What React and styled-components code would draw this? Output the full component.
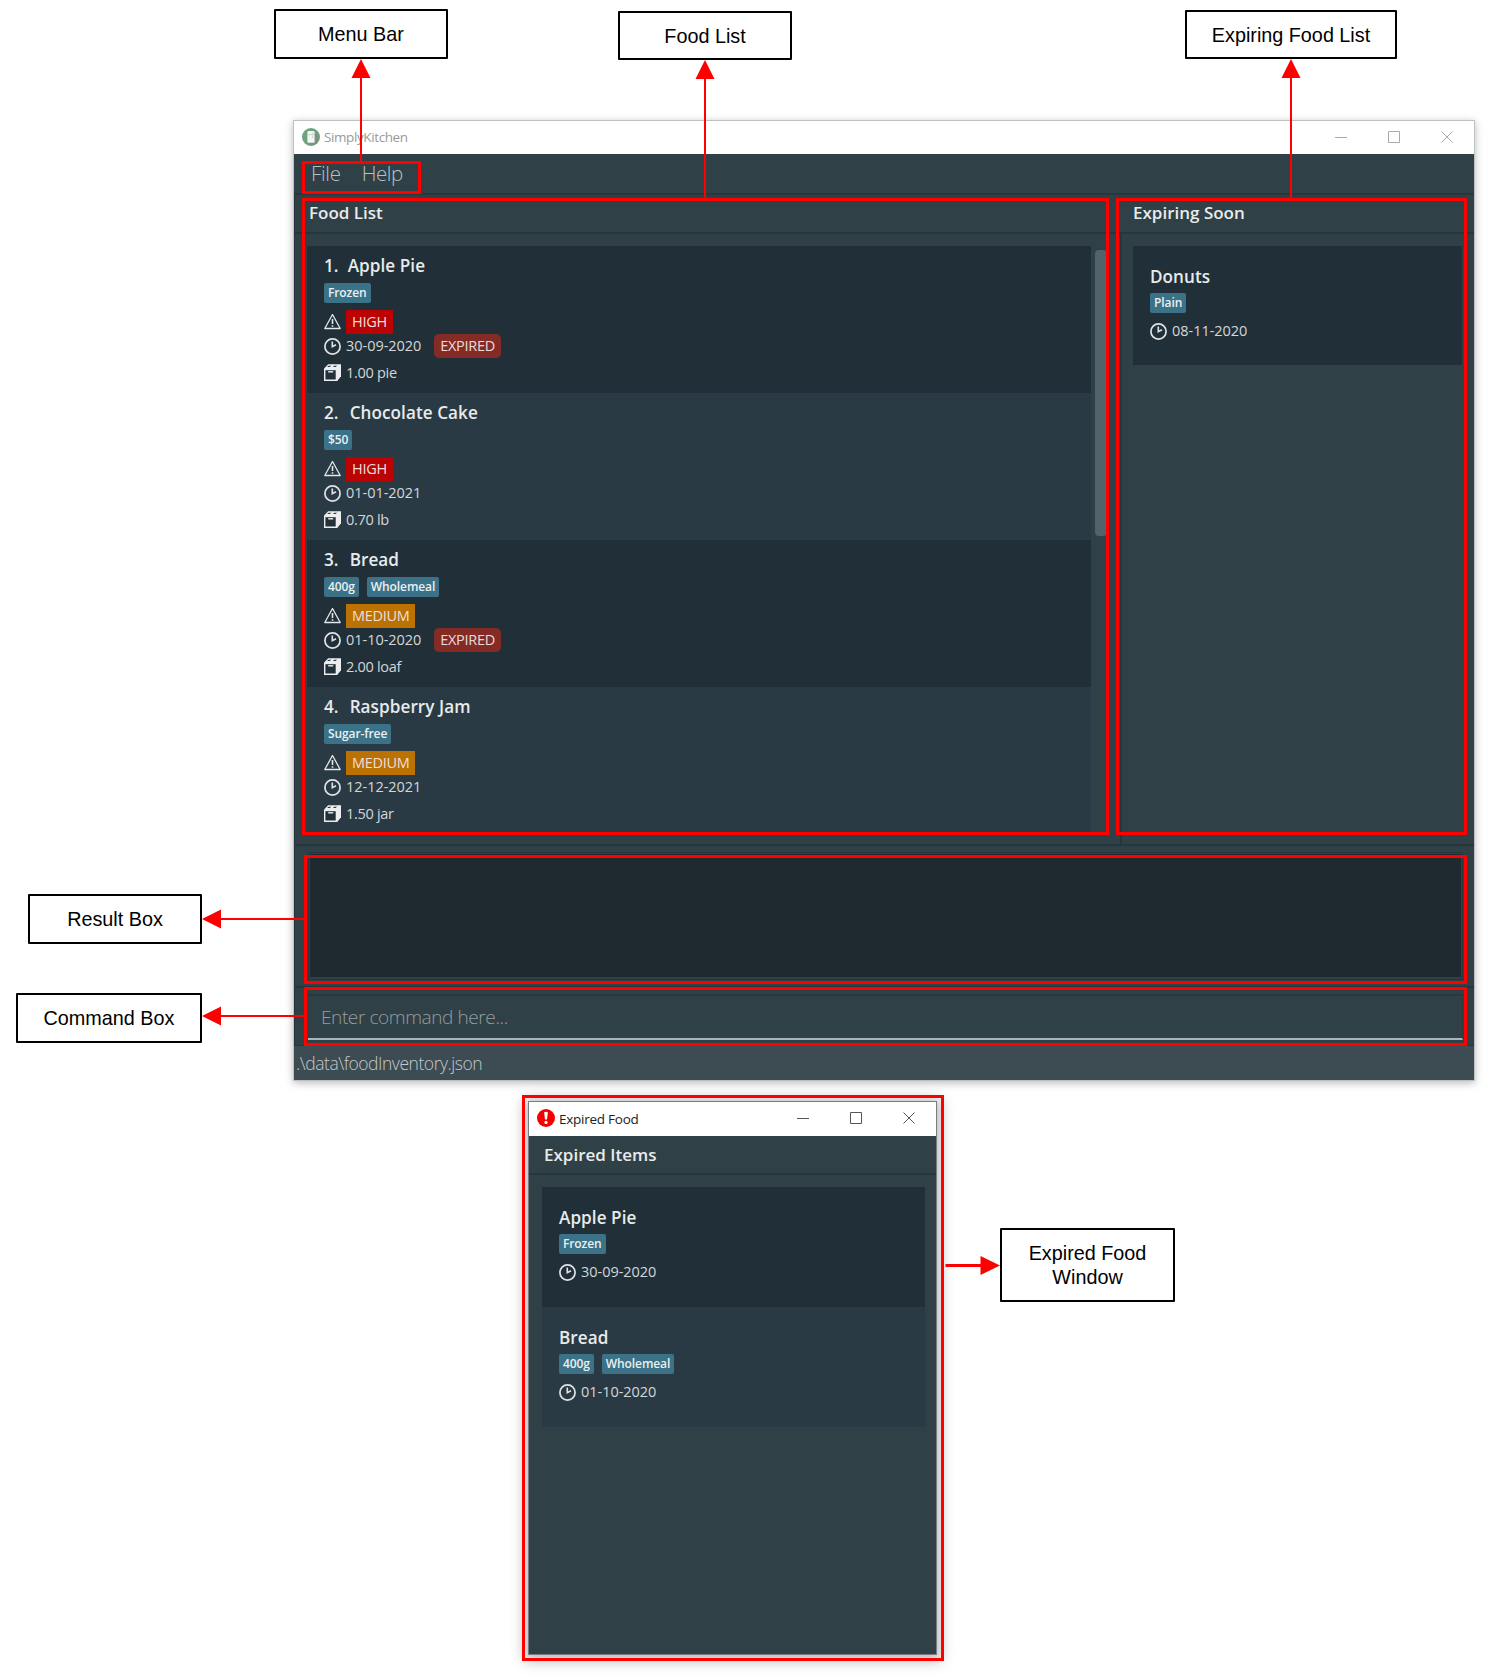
import React from "react";
import styled, { createGlobalStyle } from "styled-components";

const Global = createGlobalStyle`
  * { box-sizing: border-box; }
  body { margin: 0; background: #fff; }
`;

const ui = `"Open Sans", "Noto Sans", sans-serif`;

const Page = styled.main`
  position: relative;
  width: 1487px;
  height: 1677px;
  padding-top: 120px;
  overflow: hidden;
  background: #fff;
  font-family: ${ui};
`;

/* ---------- windows ---------- */

const Window = styled.section`
  display: flex;
  flex-direction: column;
  width: ${(p) => p.$width}px;
  height: ${(p) => p.$height}px;
  margin-left: ${(p) => p.$left}px;
  margin-bottom: 20px;
  border: 1px solid ${(p) => p.$edge};
  border-bottom-width: ${(p) => p.$bottomEdge}px;
  background: #304047;
  box-shadow: ${(p) => p.$shadow};
`;

const TitleBar = styled.header`
  display: flex;
  flex: none;
  align-items: center;
  height: ${(p) => p.$height}px;
  padding: 0 21px 2px 8px;
  background: #fff;
  color: ${(p) => p.$color};
  font-size: 13.5px;
`;

const TitleText = styled.span`
  flex: 1;
  margin-left: 4px;
  padding-top: 1px;
  line-height: 20px;
  letter-spacing: ${(p) => p.$spacing}px;
`;

const WindowButtons = styled.div`
  display: flex;
  gap: 41px;
  color: ${(p) => p.$color};
  svg { display: block; }
`;

const MenuBar = styled.nav`
  display: flex;
  flex: none;
  gap: 21px;
  height: 41px;
  padding: 2px 0 0 17px;
  border-bottom: 2px solid #28373e;
  color: #b9c0c3;
  font-size: 20.5px;
  font-weight: 300;
  line-height: 34px;
`;

const MenuItem = styled.span`
  letter-spacing: ${(p) => p.$spacing}px;
`;

const Panels = styled.div`
  display: grid;
  flex: none;
  grid-template-columns: 825px 1fr;
  height: 651px;
  border-bottom: 2px solid #27363d;
  border-left: 1px solid #27363d;
`;

const Panel = styled.section`
  display: flex;
  flex-direction: column;
  min-width: 0;
  min-height: 0;
`;

const PanelHeading = styled.h2`
  flex: none;
  height: 39px;
  margin: 0;
  padding-left: ${(p) => p.$indent}px;
  border-bottom: 2px solid #27363d;
  color: #e9ebec;
  font-size: 17px;
  font-weight: 600;
  line-height: ${(p) => p.$line || 35}px;
`;

const ListArea = styled.div`
  display: flex;
  flex: 1;
  align-items: flex-start;
  min-height: 0;
  gap: 4px;
  padding: ${(p) => p.$pad};
  border-left: ${(p) => (p.$divider ? "2px solid #27363d" : "0")};
`;

const List = styled.ul`
  flex: 1;
  height: 100%;
  margin: 0;
  padding: 0;
  overflow: hidden;
  list-style: none;
`;

const ScrollThumb = styled.div`
  width: 12px;
  height: 286px;
  margin-top: 4px;
  border-radius: 4px;
  background: #52636c;
`;

/* ---------- food cards ---------- */

const Card = styled.li`
  height: ${(p) => (p.$compact ? 120 : 147)}px;
  padding: ${(p) => (p.$compact ? 19 : 8)}px 0 0 17px;
  background: ${(p) => (p.$alt ? "#2a3a44" : "#213038")};
  &:only-child { height: 119px; }
`;

const CardTitle = styled.h3`
  display: flex;
  gap: ${(p) => (p.$first ? 9 : 11)}px;
  height: 24px;
  margin: 0 0 ${(p) => (p.$compact ? 4 : 5)}px;
  color: #e8ebec;
  font-size: 17.1px;
  font-weight: 600;
  line-height: 24px;
  letter-spacing: 0.08px;
`;

const Tags = styled.div`
  display: flex;
  gap: 8px;
  margin-bottom: ${(p) => (p.$compact ? 6 : 7)}px;
`;

const Tag = styled.span`
  height: 20px;
  padding: 0 4px;
  border-radius: 2px;
  background: #3b7288;
  color: #eaf0f2;
  font-size: 12px;
  font-weight: 600;
  line-height: 20.5px;
  letter-spacing: -0.1px;
`;

const Detail = styled.div`
  display: flex;
  align-items: center;
  height: 24px;
  margin-top: ${(p) => p.$gap || 0}px;
  color: #d3d7d9;
  font-size: 14.5px;
  line-height: 24px;
  letter-spacing: -0.3px;
  svg { flex: none; margin-right: 5px; }
`;

const DateText = styled.span`
  letter-spacing: -0.04px;
`;

const Priority = styled.span`
  height: 24px;
  padding: 0 6px;
  background: ${(p) => (p.$level === "HIGH" ? "#bb0303" : "#bb7203")};
  color: #efdfdc;
`;

const Expired = styled.span`
  height: 24px;
  margin-left: 13px;
  padding: 0 6px;
  border-radius: 5px;
  background: #842b26;
  color: #ecdcdb;
`;

/* ---------- lower part of the main window ---------- */

const ResultArea = styled.div`
  flex: none;
  height: 142px;
  padding: 6px 11px 5px 13px;
  border-bottom: 2px solid #27363d;
  border-left: 1px solid #27363d;
`;

const ResultBox = styled.div`
  height: 128px;
  padding: 1px 1px 2px;
  border: 1px solid #27363d;
  &::before {
    content: "";
    display: block;
    height: 100%;
    background: #1f2a30;
  }
`;

const CommandArea = styled.div`
  flex: none;
  height: 58px;
  padding: 6px 11px 0 13px;
  border-bottom: 1px solid #27363d;
  border-left: 1px solid #27363d;
`;

const CommandInput = styled.div`
  height: 46px;
  padding-left: 13px;
  border-top: 2px solid #2a3940;
  border-right: 1px solid #2a3940;
  border-bottom: 2px solid #a9b3b9;
  color: #959d9f;
  font-size: 19px;
  font-weight: 300;
  line-height: 42px;
  letter-spacing: -0.4px;
`;

const StatusBar = styled.footer`
  flex: 1;
  padding-left: 2px;
  background: #3d4b53;
  color: #c3c9cc;
  font-size: 17.5px;
  font-weight: 300;
  line-height: 34px;
  letter-spacing: -0.46px;
`;

/* ---------- annotations laid over the windows ---------- */

const Callout = styled.div`
  position: absolute;
  left: ${(p) => p.$x}px;
  top: ${(p) => p.$y}px;
  display: flex;
  align-items: center;
  justify-content: center;
  width: ${(p) => p.$w}px;
  height: ${(p) => p.$h}px;
  border: 2px solid #000;
  border-radius: 1px;
  background: #fff;
  color: #000;
  font: 19.8px/24px "Liberation Sans", Arial, sans-serif;
  text-align: center;
`;

const Highlight = styled.div`
  position: absolute;
  left: ${(p) => p.$x}px;
  top: ${(p) => p.$y}px;
  width: ${(p) => p.$w}px;
  height: ${(p) => p.$h}px;
  border: 3px solid #f00;
`;

const ArrowLayer = styled.svg`
  position: absolute;
  inset: 0;
  pointer-events: none;
`;

/* ---------- icons ---------- */

const FridgeIcon = () => (
  <svg width="18" height="18" viewBox="0 0 18 18">
    <circle cx="9" cy="9" r="9" fill="#6da37f" />
    <path d="M12.5 4 17 8.5a9 9 0 0 1-6 9l-5-3z" fill="#7a9481" />
    <rect x="5.4" y="3" width="7.2" height="11.7" rx="1" fill="#f4f6f4" />
    <path d="M5.4 6.6h7.2M10.8 4.4v1.4M10.8 7.6v2.6" stroke="#b9c4bc" strokeWidth=".7" />
  </svg>
);

const AlertIcon = () => (
  <svg width="18" height="18" viewBox="0 0 18 18">
    <circle cx="9" cy="9" r="9" fill="#f30000" />
    <path d="M7.1 3.3Q9 2.4 10.9 3.3L10 10.6H8z" fill="#fff" />
    <circle cx="9" cy="13.4" r="1.6" fill="#fff" />
  </svg>
);

const WarningIcon = () => (
  <svg width="17" height="17" viewBox="0 0 17 17" fill="none" stroke="#e3e6e7" strokeLinejoin="round">
    <path d="M8.5.5 16.2 14.5H.8z" strokeWidth="1.3" />
    <path d="M8.5 5v5M8.5 11.3v1.4" strokeWidth="1.6" />
  </svg>
);

const ClockIcon = () => (
  <svg width="17" height="17" viewBox="0 0 17 17" fill="none" stroke="#e0e3e5">
    <circle cx="8.5" cy="8.5" r="7.6" strokeWidth="1.7" />
    <path d="M8.3 3.6V8.7L12 6.7" strokeWidth="1.6" />
  </svg>
);

const BoxIcon = () => (
  <svg width="17" height="17" viewBox="0 0 17 17">
    <path d="M4.2.3H17v11.9L13.2 17H0V4.6z" fill="#eceeef" />
    <path d="M1.4 6.2h10.3v9.3H1.4z" fill="#223139" />
    <path d="M4.8 1.8h2.6L5.6 3.1H3zM10.6 1.8h2.6L11.4 3.1H8.8z" fill="#223139" />
    <path d="M4.2 7.8h5" stroke="#eceeef" strokeWidth="1.4" />
  </svg>
);

const Controls = ({ color }) => (
  <WindowButtons $color={color}>
    {["M0 6.5h12", "M.5.5h11v11h-11z", "M.5.5l11 11M11.5.5l-11 11"].map((d) => (
      <svg key={d} width="12" height="12" viewBox="0 0 12 12" fill="none" stroke="currentColor">
        <path d={d} />
      </svg>
    ))}
  </WindowButtons>
);

/* ---------- data ---------- */

const foods = [
  { name: "Apple Pie", tags: ["Frozen"], priority: "HIGH", date: "30-09-2020", expired: true, quantity: "1.00 pie" },
  { name: "Chocolate Cake", tags: ["$50"], priority: "HIGH", date: "01-01-2021", quantity: "0.70 lb" },
  { name: "Bread", tags: ["400g", "Wholemeal"], priority: "MEDIUM", date: "01-10-2020", expired: true, quantity: "2.00 loaf" },
  { name: "Raspberry Jam", tags: ["Sugar-free"], priority: "MEDIUM", date: "12-12-2021", quantity: "1.50 jar" },
];
const expiring = [{ name: "Donuts", tags: ["Plain"], date: "08-11-2020" }];
const expiredFoods = foods.filter((f) => f.expired);

const callouts = [
  ["Menu Bar", 274, 9, 174, 50],
  ["Food List", 618, 11, 174, 49],
  ["Expiring Food List", 1185, 10, 212, 49],
  ["Result Box", 28, 894, 174, 50],
  ["Command Box", 16, 993, 186, 50],
  ["Expired Food\nWindow", 1000, 1228, 175, 74],
];

const highlights = [
  [302, 161, 119, 33],
  [302, 198, 807, 637],
  [1116, 198, 351, 637],
  [304, 855, 1163, 129],
  [304, 987, 1163, 59],
  [522, 1095, 422, 566],
];

const FoodCard = ({ food, index, compact }) => (
  <Card $alt={index % 2 === 1} $compact={compact}>
    <CardTitle $compact={compact} $first={index === 0}>
      {!compact && <span>{index + 1}.</span>}
      <span>{food.name}</span>
    </CardTitle>
    <Tags $compact={compact}>
      {food.tags.map((t) => (
        <Tag key={t}>{t}</Tag>
      ))}
    </Tags>
    {!compact && (
      <Detail>
        <WarningIcon />
        <Priority $level={food.priority}>{food.priority}</Priority>
      </Detail>
    )}
    <Detail>
      <ClockIcon />
      <DateText>{food.date}</DateText>
      {!compact && food.expired && <Expired>EXPIRED</Expired>}
    </Detail>
    {!compact && (
      <Detail $gap={2.5}>
        <BoxIcon />
        {food.quantity}
      </Detail>
    )}
  </Card>
);

const FoodCards = ({ items, compact }) => (
  <List>
    {items.map((f, i) => (
      <FoodCard key={f.name} food={f} index={i} compact={compact} />
    ))}
  </List>
);

export default function App() {
  return (
    <Page>
      <Global />
      <Window $width={1182} $height={961} $left={293} $edge="#bcc0c1" $bottomEdge={2} $shadow="0 2px 8px rgba(0,0,0,.28)">
        <TitleBar $height={33} $color="#999">
          <FridgeIcon />
          <TitleText $spacing={-0.4}>SimplyKitchen</TitleText>
          <Controls color="#aaa" />
        </TitleBar>
        <MenuBar>
          <MenuItem $spacing={-0.3}>File</MenuItem>
          <MenuItem $spacing={-0.4}>Help</MenuItem>
        </MenuBar>
        <Panels>
          <Panel>
            <PanelHeading $indent={14}>Food List</PanelHeading>
            <ListArea $pad="12px 13px 10px 12px">
              <FoodCards items={foods} />
              <ScrollThumb />
            </ListArea>
          </Panel>
          <Panel>
            <PanelHeading $indent={13}>Expiring Soon</PanelHeading>
            <ListArea $divider $pad="12px 12px 10px 11px">
              <FoodCards items={expiring} compact />
            </ListArea>
          </Panel>
        </Panels>
        <ResultArea>
          <ResultBox />
        </ResultArea>
        <CommandArea>
          <CommandInput>Enter command here...</CommandInput>
        </CommandArea>
        <StatusBar>.\data\foodInventory.json</StatusBar>
      </Window>

      <Window $width={409} $height={554} $left={528} $edge="#777d80" $bottomEdge={1} $shadow="0 2px 13px 4px rgba(0,0,0,.28)">
        <TitleBar $height={34} $color="#222">
          <AlertIcon />
          <TitleText $spacing={-0.25}>Expired Food</TitleText>
          <Controls color="#555" />
        </TitleBar>
        <Panel>
          <PanelHeading $indent={15} $line={37}>Expired Items</PanelHeading>
          <ListArea $pad="12px 11px 0 13px">
            <FoodCards items={expiredFoods} compact />
          </ListArea>
        </Panel>
      </Window>

      {highlights.map(([x, y, w, h]) => (
        <Highlight key={`${x}-${y}`} $x={x} $y={y} $w={w} $h={h} />
      ))}
      <ArrowLayer width="1487" height="1677" fill="#f00" stroke="#f00">
        <path
          d="M361 76V162M705 76V199M1291 76V199M218 919H305M218 1016H305"
          strokeWidth="2"
        />
        <path d="M945.5 1265.5H983" strokeWidth="3" />
        <path
          d="M361 59l9.5 19h-19zM705 60l9.5 19h-19zM1291 59l9.5 19h-19zM202 919l19-9.5v19zM202 1016l19-9.5v19zM1000 1265.5l-19.5-9.5v19z"
          stroke="none"
        />
      </ArrowLayer>
      {callouts.map(([label, x, y, w, h]) => (
        <Callout key={label} $x={x} $y={y} $w={w} $h={h}>
          {label.split("\n").map((line, i) => (
            <React.Fragment key={line}>
              {i > 0 && <br />}
              {line}
            </React.Fragment>
          ))}
        </Callout>
      ))}
    </Page>
  );
}
